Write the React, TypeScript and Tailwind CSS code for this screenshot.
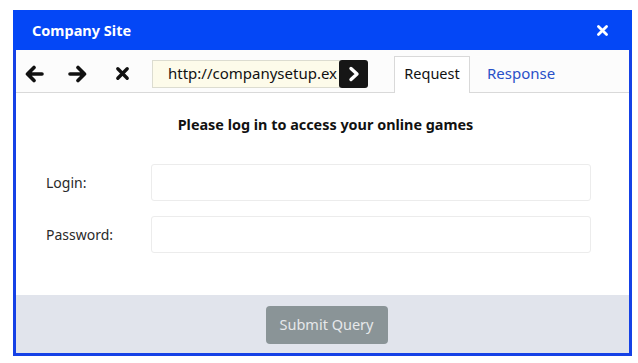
import React from "react";

const font = { fontFamily: '"Noto Sans", "Open Sans", sans-serif' };

function ArrowLeft() {
  return (
    <svg width="20" height="18" viewBox="0 0 20 18">
      <path d="M18 9H4M10 2.5L3.5 9L10 15.5" fill="none" stroke="#111" strokeWidth="3.6" strokeLinecap="round" strokeLinejoin="round" />
    </svg>
  );
}
function ArrowRight() {
  return (
    <svg width="20" height="18" viewBox="0 0 20 18">
      <path d="M2 9H16M10 2.5L16.5 9L10 15.5" fill="none" stroke="#111" strokeWidth="3.6" strokeLinecap="round" strokeLinejoin="round" />
    </svg>
  );
}
function XIcon({ color = "#111", size = 16, w = 3.6 }: { color?: string; size?: number; w?: number }) {
  return (
    <svg width={size} height={size} viewBox="0 0 16 16">
      <path d="M3 3L13 13M13 3L3 13" fill="none" stroke={color} strokeWidth={w} strokeLinecap="round" />
    </svg>
  );
}

export default function App() {
  return (
    <div className="w-[638px] h-[363px] bg-white pt-[10px] pl-[13px]" style={font}>
      <div className="w-[619px] h-[346px] border-[3px] border-[#1541e6] flex flex-col bg-white">
        <div className="bg-[#0447f6] flex items-center justify-between pl-[16px] pr-[23px] -mx-[3px] -mt-[3px] h-[40px] pt-[1px]">
          <span className="text-white font-bold text-[14.5px] ml-[3px]">Company Site</span>
          <XIcon color="#ffffff" size={13} w={3.4} />
        </div>
        <div className="h-[43px] flex items-end border-b border-[#d9d9d9] bg-[#fcfcfc]">
          <div className="flex items-center h-full pt-[5px]">
            <div className="w-[40px] flex justify-center ml-[-2px]"><ArrowLeft /></div>
            <div className="w-[40px] flex justify-center ml-[4px]"><ArrowRight /></div>
            <div className="w-[40px] flex justify-center ml-[4px]"><XIcon size={15} w={3.6} /></div>
            <div className="ml-[10px] flex items-center h-[28px]">
              <div className="w-[188px] h-[28px] bg-[#fdfbea] border border-[#dcdcd0] text-[15px] text-[#111] flex items-center pl-[15px] overflow-hidden whitespace-nowrap">
                http://companysetup.ex
              </div>
              <div className="w-[29px] h-[28px] bg-[#161616] rounded-[3px] flex items-center justify-center -ml-[1px]">
                <svg width="12" height="16" viewBox="0 0 12 16">
                  <path d="M3 2.5L9 8L3 13.5" fill="none" stroke="#fff" strokeWidth="3.4" strokeLinecap="round" strokeLinejoin="round" />
                </svg>
              </div>
            </div>
          </div>
          <div className="ml-[26px] h-[37px] w-[76px] border border-b-0 border-[#d9d9d9] bg-white flex items-center justify-center text-[14.5px] text-[#111] -mb-[1px] pb-[2px]">
            Request
          </div>
          <div className="ml-[17px] h-[37px] flex items-center text-[15px] text-[#2950c8]">Response</div>
        </div>
        <div className="flex-1 flex flex-col">
          <div className="text-center font-bold text-[14.4px] text-[#111] mt-[21px] pl-[6px]">Please log in to access your online games</div>
          <div className="mt-[28px] flex items-center">
            <span className="w-[135px] pl-[30px] text-[14px] text-[#2a2a2a]">Login:</span>
            <div className="w-[440px] h-[37px] border border-[#ececec] rounded-[3px]" />
          </div>
          <div className="mt-[15px] flex items-center">
            <span className="w-[135px] pl-[30px] text-[14px] text-[#2a2a2a]">Password:</span>
            <div className="w-[440px] h-[37px] border border-[#ececec] rounded-[3px]" />
          </div>
        </div>
        <div className="h-[58px] bg-[#e1e4ec] flex items-center justify-center pt-[2px]">
          <div className="w-[122px] h-[38px] bg-[#8a9497] rounded-[4px] flex items-center justify-center text-[14.5px] text-[#e6e8ea] ml-[8px]">
            Submit Query
          </div>
        </div>
      </div>
    </div>
  );
}
